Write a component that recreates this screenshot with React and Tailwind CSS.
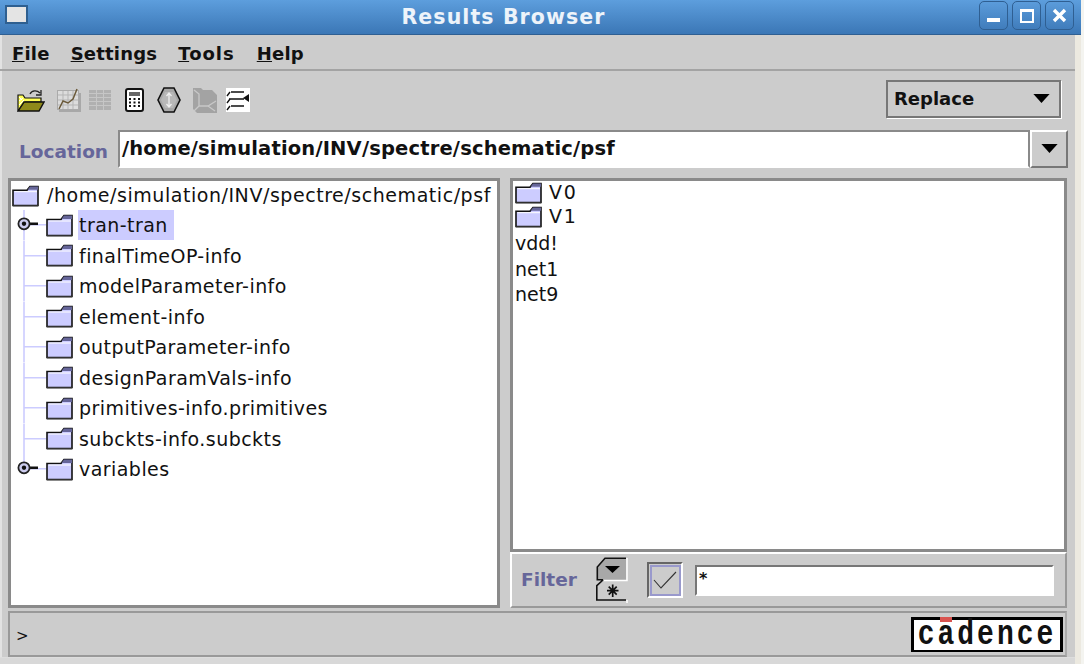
const treeItems = [
  { label: "tran-tran", toggle: true, selected: true },
  { label: "finalTimeOP-info" },
  { label: "modelParameter-info" },
  { label: "element-info" },
  { label: "outputParameter-info" },
  { label: "designParamVals-info" },
  { label: "primitives-info.primitives" },
  { label: "subckts-info.subckts" },
  { label: "variables", toggle: true, last: true },
];

const Folder = ({ className }) => (
  <svg viewBox="0 0 27 23" className={className} preserveAspectRatio="none">
    <path d="M1 5.5H15L18 1.5H26V21.5H1Z" fill="#ccccff" stroke="#111" strokeWidth="1.6" />
    <path d="M15.5 5L18 1.5H26V5Z" fill="#666699" />
    <path d="M2.5 7H25" stroke="#fff" strokeWidth="1" />
    <path d="M1 22H26" stroke="#555" strokeWidth="1" />
  </svg>
);

// tree connector + optional expander knob
const Connector = ({ toggle, last }) => (
  <svg viewBox="0 0 35 31" className="h-[30.5px] w-[35px] shrink-0" preserveAspectRatio="none">
    <path d={`M13 0V${last ? 15 : 31}M13 15H35`} stroke="#ccccff" strokeWidth="1.6" fill="none" />
    {toggle && (
      <>
        <path d="M17 14H27" stroke="#111" strokeWidth="2.6" />
        <circle cx="13" cy="14" r="5.6" fill="#ccccee" stroke="#222" strokeWidth="1.8" />
        <circle cx="13" cy="14" r="2.2" fill="#111" />
      </>
    )}
  </svg>
);

const ToolIcons = () => (
  <div className="mt-[3px] flex items-center">
    {/* open */}
    <svg viewBox="0 0 28 23" className="h-[23px] w-[28px]">
      <path d="M13 5C15 1 20 1 23 4M24 1V6H19" fill="none" stroke="#222" strokeWidth="1.3" />
      <path d="M1 6H6L8 9H24V13H8L3 21H1Z" fill="#ffff55" stroke="#111" strokeWidth="1.2" />
      <path d="M2 8L5 11M2 12L6 9M2 16L7 11" stroke="#fff" strokeWidth="1" />
      <path d="M1 22L7 13H27L22 22Z" fill="#8f8a1a" stroke="#111" strokeWidth="1.4" />
    </svg>
    {/* graph, disabled */}
    <svg viewBox="0 0 24 24" className="ml-[12px] h-[24px] w-[24px]">
      <rect x="2" y="5" width="22" height="19" fill="#a8a8a8" />
      <rect x="0.5" y="2.5" width="21" height="19" fill="#dcdcdc" stroke="#aaa" strokeWidth="1" />
      <path d="M1 7H21M1 12H21M1 17H21M6 3V21M11 3V21M16 3V21" stroke="#b5b5b5" strokeWidth="1" />
      <path d="M2 21L6 13L11 15L16 11L20 1" fill="none" stroke="#6b5a3a" strokeWidth="1.5" />
    </svg>
    {/* table, disabled */}
    <svg viewBox="0 0 22 20" className="ml-[8px] h-[20px] w-[22px]">
      <rect width="22" height="20" fill="#b0b0b0" />
      <path d="M0 3.5H22M0 7.5H22M0 11.5H22M0 15.5H22M7.5 0V20M14.5 0V20" stroke="#c6c6c6" strokeWidth="1" />
    </svg>
    {/* calculator */}
    <svg viewBox="0 0 20 24" className="ml-[14px] h-[24px] w-[20px]">
      <rect x="1" y="1" width="17" height="22" rx="2" fill="#fff" stroke="#111" strokeWidth="2" />
      <rect x="4" y="4" width="11" height="4" fill="#666" />
      <path d="M4 11H15M4 14.5H15M4 18H15" stroke="#111" strokeWidth="2" strokeDasharray="2 2.5" />
    </svg>
    {/* diamond */}
    <svg viewBox="0 0 24 26" className="ml-[12px] h-[26px] w-[24px]">
      <path d="M7 1H17L23 13L17 25H7L1 13Z" fill="#a8a8a8" stroke="#111" strokeWidth="1.6" />
      <path d="M8 5H16L20 13L16 21H8L4 13Z" fill="#b8b8b8" />
      <path d="M12 6V20M9.5 9L12 6L14.5 9M9.5 17L12 20L14.5 17" fill="none" stroke="#eee" strokeWidth="1.3" />
    </svg>
    {/* branch, disabled */}
    <svg viewBox="0 0 25 25" className="ml-[11px] h-[25px] w-[25px]">
      <path d="M1 0H9L11 2H20L25 7V25H5L1 21Z" fill="#a3a3a3" />
      <path d="M2 2L7 6V18H16L24 13M7 18L2 23M16 18L23 23" fill="none" stroke="#c8c8c8" strokeWidth="1.3" />
    </svg>
    {/* list */}
    <svg viewBox="0 0 24 24" className="ml-[9px] h-[24px] w-[24px]">
      <rect width="24" height="24" fill="#fff" />
      <path d="M5 4H18M3 11H18M5 18H18M1 8L4 4M1 15L4 11M1 22L4 18" fill="none" stroke="#111" strokeWidth="1.4" />
      <path d="M23 6V14L17 10Z" fill="#111" />
    </svg>
  </div>
);

const TreeRow = ({ item }) => (
  <div className="flex h-[30.5px] items-center">
    <Connector toggle={item.toggle} last={item.last} />
    <Folder className="h-[23px] w-[27px] shrink-0" />
    <span
      className={`ml-[5px] flex h-[30px] items-center pl-[1px] pr-[6px] tracking-[0.45px] ${
        item.selected ? "bg-[#ccccff]" : ""
      }`}
    >
      {item.label}
    </span>
  </div>
);

export default function App() {
  return (
    <div className="flex h-[664px] w-[1084px] overflow-hidden bg-[#f4f4f0] font-['DejaVu_Sans',sans-serif] text-[#111]">
      <div className="flex w-[1081px] shrink-0 flex-col">
        {/* title bar */}
        <div className="relative flex h-[35px] shrink-0 items-center justify-center border-b border-[#2f5f92] bg-gradient-to-b from-[#5d9edd] to-[#3b77b6] pr-[74px]">
          <div className="absolute left-[5px] top-[5px] h-[19px] w-[23px] border-2 border-[#2e5f90] bg-[#e4e4e4]" />
          <span className="text-[20.5px] font-bold tracking-[1.1px] text-white/90">Results Browser</span>
          <div className="absolute right-[7px] top-[1px] flex gap-[4px]">
            <div className="flex h-[29px] w-[29px] items-end justify-center rounded-[5px] border border-[#2f5f92] pb-[7px]">
              <div className="h-[4px] w-[13px] bg-white" />
            </div>
            <div className="flex h-[29px] w-[29px] items-center justify-center rounded-[5px] border border-[#2f5f92]">
              <div className="h-[14px] w-[14px] border-2 border-t-[3px] border-white" />
            </div>
            <div className="flex h-[29px] w-[29px] items-center justify-center rounded-[5px] border border-[#2f5f92]">
              <svg viewBox="0 0 15 15" className="h-[15px] w-[15px]">
                <path d="M2 2L13 13M13 2L2 13" stroke="#fff" strokeWidth="3.4" />
              </svg>
            </div>
          </div>
        </div>

        <div className="flex min-h-0 flex-1">
          <div className="flex w-[1075px] shrink-0 flex-col bg-[#cccccc] shadow-[inset_2px_0_0_#e2e2e2]">
            {/* menu */}
            <div className="flex h-[36px] shrink-0 items-center gap-[21px] border-b-2 border-[#a3a3a3] pl-[12px] pt-[2px] text-[18px] font-bold tracking-[0.2px]">
              <span><u>F</u>ile</span>
              <span><u>S</u>ettings</span>
              <span className="tracking-[1px]"><u>T</u>ools</span>
              <span className="ml-[1px]"><u>H</u>elp</span>
            </div>

            {/* toolbar */}
            <div className="flex h-[55px] shrink-0 items-center justify-between pl-[17px] pr-[14px]">
              <ToolIcons />
              <div className="flex h-[38px] w-[175px] items-center justify-between border-2 border-[#777] pl-[6px] pr-[9px] text-[18px] font-bold shadow-[1px_1px_0_#fff]">
                <span>Replace</span>
                <svg viewBox="0 0 18 10" className="h-[9px] w-[17px]"><path d="M0 0H18L9 10Z" fill="#000" /></svg>
              </div>
            </div>

            {/* location */}
            <div className="flex h-[44px] shrink-0 items-center pl-[19px] pr-[7px] pt-[1px]">
              <span className="w-[99px] shrink-0 pt-[6px] text-[18.5px] font-bold text-[#66669a]">Location</span>
              <div className="flex h-[38px] flex-1 items-center border-2 border-[#8a8a8a] border-b-white bg-white pl-[2px] text-[19.5px] font-bold tracking-[0.17px]">
                /home/simulation/INV/spectre/schematic/psf
              </div>
              <div className="flex h-[38px] w-[38px] shrink-0 items-center justify-center border-2 border-[#777] border-l-white border-t-white">
                <svg viewBox="0 0 18 10" className="h-[9px] w-[17px]"><path d="M0 0H18L9 10Z" fill="#000" /></svg>
              </div>
            </div>

            {/* panels */}
            <div className="mt-[8px] flex h-[430px] shrink-0 gap-[10px] px-[8px]">
              <div className="w-[492px] shrink-0 overflow-hidden border-[3px] border-[#8a8a8a] bg-white text-[19px]">
                <div className="flex h-[29px] items-center pl-[1px]">
                  <Folder className="h-[22px] w-[27px] shrink-0" />
                  <span className="ml-[8px] whitespace-nowrap tracking-[0.55px]">/home/simulation/INV/spectre/schematic/psf</span>
                </div>
                {treeItems.map((item) => (
                  <TreeRow key={item.label} item={item} />
                ))}
              </div>

              <div className="flex flex-1 flex-col">
                <div className="h-[374px] border-[3px] border-[#8a8a8a] bg-white pl-[2px] text-[19px] leading-[25.5px]">
                  <div className="flex h-[23px] items-center gap-[7px]">
                    <Folder className="h-[22px] w-[27px] shrink-0" />
                    <span className="tracking-[1.8px]">V0</span>
                  </div>
                  <div className="flex h-[25px] items-center gap-[7px]">
                    <Folder className="h-[22px] w-[27px] shrink-0" />
                    <span className="tracking-[1.8px]">V1</span>
                  </div>
                  <div className="mt-[2px]">vdd!</div>
                  <div>net1</div>
                  <div>net9</div>
                </div>
                <div className="flex h-[56px] items-center border-2 border-[#999] border-t-white border-l-white pl-[9px] pr-[11px]">
                  <span className="w-[75px] shrink-0 text-[18.5px] font-bold text-[#66669a]">Filter</span>
                  <svg viewBox="0 0 32 46" className="h-[46px] w-[32px] shrink-0">
                    <path d="M30 2H9L2 10V23H30Z" fill="#a8a8a8" />
                    <path d="M30 1.3H9L1.3 10V22.7H7M7 23L0.8 28.7V43H30" fill="none" stroke="#111" strokeWidth="1.6" />
                    <path d="M31 1V23.5H8M31 43V46" fill="none" stroke="#fff" strokeWidth="1.5" />
                    <path d="M9 9H24L16.5 16Z" fill="#000" />
                    <path d="M16.7 27.5V40M11 33.7H22.5M12.7 29.7L20.7 37.7M20.7 29.7L12.7 37.7" stroke="#111" strokeWidth="1.7" />
                  </svg>
                  <div className="ml-[19px] flex h-[36px] w-[36px] shrink-0 items-center justify-center border-2 border-[#666] border-b-white border-r-white">
                    <div className="flex h-[31px] w-[31px] items-center justify-center border-2 border-[#9999cc]">
                      <svg viewBox="0 0 24 20" className="h-[20px] w-[24px]">
                        <path d="M1 10L8 18L23 2" fill="none" stroke="#333" strokeWidth="1.1" />
                      </svg>
                    </div>
                  </div>
                  <div className="ml-[12px] flex h-[31px] flex-1 items-start border-2 border-[#777] border-b-white border-r-white bg-white pl-[2px] text-[16px] font-bold leading-[24px]">
                    *
                  </div>
                </div>
              </div>
            </div>

            {/* status */}
            <div className="mx-[8px] mt-[3px] flex h-[46px] shrink-0 items-center justify-between border-2 border-[#999] border-r-[#aaa] pl-[6px] pr-[2px]">
              <span className="mt-[4px] text-[15px]">&gt;</span>
              <div className="relative flex h-[35px] w-[152px] items-center justify-center border-[3px] border-b-2 border-black bg-white font-['Liberation_Mono',monospace] text-[28px] font-bold leading-none tracking-[3px]">
                <div className="absolute left-[26px] top-[-3px] h-[5px] w-[12px] bg-[#d9534f]" />
                <span className="scale-y-[1.25]">cadence</span>
              </div>
            </div>
            <div className="flex-1 border-t border-[#ddd] bg-[#d8d8d8]" />
          </div>
          <div className="flex-1 bg-[#ece9e0]" />
        </div>
      </div>
    </div>
  );
}
